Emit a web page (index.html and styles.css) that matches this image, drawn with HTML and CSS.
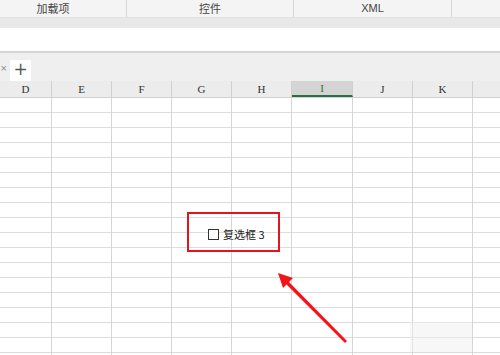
FILE: index.html
```html
<!DOCTYPE html>
<html>
<head>
<meta charset="utf-8">
<link rel="stylesheet" href="styles.css">
</head>
<body>
<div class="page">
  <div class="ribbon-tabs">
    <div class="rtab rtab-first">加载项</div>
    <div class="rtab rtab-mid">控件</div>
    <div class="rtab rtab-xml">XML</div>
    <div class="rtab rtab-rest"></div>
  </div>
  <div class="ribbon-band"></div>
  <div class="formula-area"></div>
  <div class="sheet-tabs">
    <span class="close-glyph">×</span>
    <div class="add-tab">+</div>
  </div>
  <div class="col-headers">
    <div class="ch ch-d">D</div>
    <div class="ch">E</div>
    <div class="ch">F</div>
    <div class="ch">G</div>
    <div class="ch">H</div>
    <div class="ch ch-sel">I</div>
    <div class="ch">J</div>
    <div class="ch">K</div>
    <div class="ch ch-l"></div>
  </div>
  <div class="grid">
    <div class="col col-d"></div>
    <div class="col"></div>
    <div class="col"></div>
    <div class="col"></div>
    <div class="col"></div>
    <div class="col"></div>
    <div class="col"></div>
    <div class="col"></div>
    <div class="col col-l"></div>
  </div>

  <div class="highlight-box"></div>
  <div class="checkbox-ctl"><span class="cb"></span><span class="cb-label">复选框 3</span></div>
  <div class="watermark"></div>
  <svg class="arrow" width="500" height="355" viewBox="0 0 500 355">
    <polygon points="345,343 347,341 288,281 286,284" fill="#f2141a"/>
    <polygon points="278,273 293,278 283,288" fill="#f2141a"/>
  </svg>
</div>
</body>
</html>
```
FILE: styles.css
```css
* { box-sizing: border-box; }
html, body { margin: 0; padding: 0; }
body {
  width: 500px;
  height: 355px;
  overflow: hidden;
  background: #ffffff;
  font-family: "Noto Sans CJK SC", "Noto Sans", sans-serif;
}
.page {
  position: relative;
  width: 500px;
  height: 355px;
  overflow: hidden;
}
.ribbon-tabs {
  display: flex;
  height: 17px;
  background: #f4f4f4;
}
.rtab {
  font-size: 11px;
  color: #444;
  line-height: 17px;
  text-align: center;
  border-right: 1px solid #d6d6d6;
}
.rtab-first { width: 127px; padding-right: 20px; }
.rtab-mid { width: 167px; }
.rtab-xml { width: 158px; font-family: "Liberation Sans", sans-serif; font-size: 11px; }
.rtab-rest { flex: 1; border-right: none; }
.ribbon-band {
  height: 11px;
  background: #e8e8e8;
  border-top: 1px solid #e2e2e2;
}
.formula-area {
  height: 23px;
  background: #ffffff;
}
.sheet-tabs {
  position: relative;
  height: 30px;
  background: #efefef;
  border-top: 2px solid #d6d6d6;
  display: flex;
  align-items: flex-end;
}
.close-glyph {
  position: absolute;
  left: 0;
  top: 10px;
  font-size: 9px;
  line-height: 10px;
  color: #888;
  font-family: "DejaVu Sans", sans-serif;
}
.add-tab {
  margin-left: 10px;
  width: 21px;
  height: 21px;
  background: #ffffff;
  color: #555;
  font-family: "DejaVu Sans", sans-serif;
  font-size: 17px;
  line-height: 19px;
  text-align: center;
}
.col-headers {
  display: flex;
  height: 17px;
  background: #ececec;
  border-bottom: 1px solid #d0d0d0;
}
.ch {
  width: 60px;
  flex: none;
  border-right: 1px solid #d0d0d0;
  font-family: "Liberation Serif", "DejaVu Serif", serif;
  font-size: 11px;
  color: #333;
  text-align: center;
  line-height: 16px;
}
.ch-d { width: 52px; }
.ch-sel {
  width: 61px;
  background: #d4d4d4;
  color: #2f6e4a;
  border-bottom: 2px solid #217346;
  line-height: 15px;
}
.ch-l { flex: 1; border-right: none; }
.grid {
  display: flex;
  height: 258px;
}
.col {
  width: 60px;
  flex: none;
  border-right: 1px solid #d6d6d6;
  background: repeating-linear-gradient(to bottom, transparent 0, transparent 14px, #dcdcdc 14px, #dcdcdc 15px);
}
.col-d { width: 52px; }
.col:nth-child(6) { width: 61px; }
.col-l { flex: 1; border-right: none; }

.highlight-box {
  position: absolute;
  left: 187px;
  top: 212px;
  width: 93px;
  height: 40px;
  border: 2px solid #e3141c;
}
.checkbox-ctl {
  position: absolute;
  left: 208px;
  top: 228px;
  display: flex;
  align-items: center;
  gap: 4px;
}
.cb {
  width: 11px;
  height: 11px;
  border: 1px solid #333;
  background: #fff;
}
.cb-label {
  font-size: 11px;
  color: #222;
  line-height: 13px;
}
.watermark {
  position: absolute;
  left: 410px;
  top: 322px;
  width: 62px;
  height: 30px;
  background: rgba(240,240,240,0.55);
}
.arrow {
  position: absolute;
  left: 0;
  top: 0;
}
```
